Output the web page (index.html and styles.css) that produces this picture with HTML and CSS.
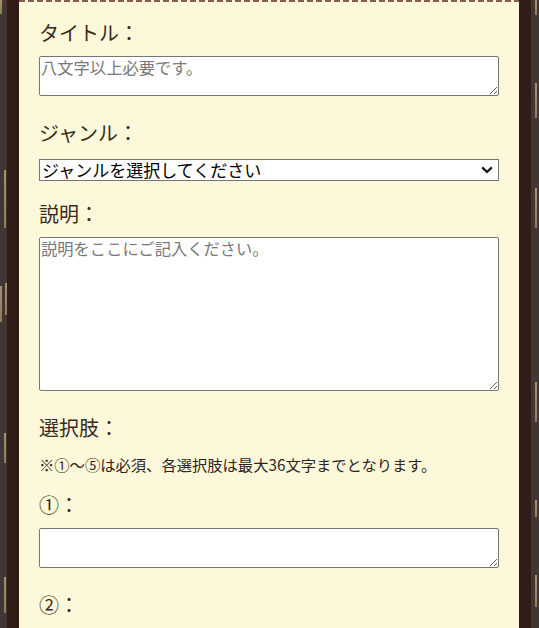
FILE: index.html
```html
<!DOCTYPE html>
<html lang="ja">
<head>
<meta charset="utf-8">
<title>投稿フォーム</title>
<link rel="stylesheet" href="styles.css">
</head>
<body>
<div class="frame">
  <form class="panel">
    <div class="field">
      <label class="label" for="title">タイトル：</label>
      <textarea id="title" class="input input-short" placeholder="八文字以上必要です。"></textarea>
    </div>
    <div class="field field-select">
      <label class="label" for="genre">ジャンル：</label>
      <div class="select-wrap">
        <select id="genre" class="select">
          <option>ジャンルを選択してください</option>
        </select>
        <svg class="chevron" width="12" height="8" viewBox="0 0 12 8" aria-hidden="true">
          <path d="M1.2 1.4 L6 6 L10.8 1.4" fill="none" stroke="#111" stroke-width="2.2"/>
        </svg>
      </div>
    </div>
    <div class="field">
      <label class="label" for="desc">説明：</label>
      <textarea id="desc" class="input input-tall" placeholder="説明をここにご記入ください。"></textarea>
    </div>
    <div class="field">
      <div class="label">選択肢：</div>
      <p class="note">※①～⑤は必須、各選択肢は最大36文字までとなります。</p>
      <label class="label" for="c1">①：</label>
      <textarea id="c1" class="input input-short"></textarea>
    </div>
    <div class="field">
      <label class="label" for="c2">②：</label>
      <textarea id="c2" class="input input-short"></textarea>
    </div>
  </form>
</div>
</body>
</html>
```

FILE: styles.css
```css
html, body {
  margin: 0;
  padding: 0;
}
body {
  background-color: #413634;
  background-image:
    linear-gradient(#a3926a, #8e7e58),
    linear-gradient(#a3926a, #8e7e58),
    linear-gradient(#a3926a, #8e7e58),
    linear-gradient(#a3926a, #8e7e58),
    linear-gradient(#a3926a, #8e7e58),
    linear-gradient(#a3926a, #8e7e58),
    linear-gradient(#a3926a, #8e7e58),
    linear-gradient(#a3926a, #8e7e58),
    linear-gradient(#a3926a, #8e7e58),
    linear-gradient(#a3926a, #8e7e58),
    linear-gradient(#a3926a, #8e7e58),
    linear-gradient(#a3926a, #8e7e58);
  background-repeat: no-repeat;
  background-size:
    2px 14px, 2px 58px, 2px 36px, 2px 32px, 2px 30px, 2px 36px,
    2px 15px, 2px 35px, 2px 40px, 2px 40px, 2px 17px, 2px 32px;
  background-position:
    0 0, 4px 170px, 0 286px, 5px 283px, 4px 433px, 4px 577px,
    535px 0, 535px 83px, 535px 188px, 535px 382px, 535px 500px, 535px 575px;
  font-family: "Noto Sans CJK JP", "Noto Sans", sans-serif;
  height: 628px;
  overflow: hidden;
}
.frame {
  margin: 0 8px 0 7px;
  padding: 0 12px;
  background: #311c16;
  min-height: 628px;
}
.panel {
  background-color: #fdf8da;
  background-image: repeating-linear-gradient(90deg, #8d5d4c 0 6px, transparent 6px 9px);
  background-size: 100% 2px;
  background-repeat: no-repeat;
  padding: 18px 20px 0 20px;
  min-height: 628px;
  box-sizing: border-box;
}
.field {
  display: flex;
  flex-direction: column;
  align-items: flex-start;
  margin-bottom: 22px;
}
.field-select {
  margin-bottom: 18px;
}
.label {
  display: block;
  font-size: 20px;
  line-height: 30px;
  color: #3a2a20;
  margin-bottom: 8px;
}
.field-select .label {
  margin-bottom: 11px;
}
.input {
  display: block;
  width: 460px;
  box-sizing: border-box;
  margin: 0;
  padding: 0 1px;
  border: 1px solid #767676;
  border-radius: 2px;
  background: #fff;
  font-family: "Noto Sans CJK JP", sans-serif;
  font-size: 16.3px;
  line-height: 20px;
  color: #222;
}
.input::placeholder {
  color: #787878;
}
.input-short {
  height: 40px;
}
.input-tall {
  height: 154px;
}
.select-wrap {
  position: relative;
  width: 460px;
  height: 22px;
}
.select {
  appearance: none;
  -webkit-appearance: none;
  display: block;
  width: 460px;
  height: 22px;
  margin: 0;
  padding: 0 24px 0 2px;
  box-sizing: border-box;
  border: 1px solid #767676;
  border-radius: 0;
  background: #fff;
  font-family: "Noto Sans CJK JP", sans-serif;
  font-size: 17px;
  line-height: 20px;
  color: #000;
}
.chevron {
  position: absolute;
  right: 6px;
  top: 7px;
  pointer-events: none;
}
.note {
  margin: 1px 0 14px 0;
  font-size: 15.3px;
  line-height: 24px;
  color: #2e2320;
}
```
